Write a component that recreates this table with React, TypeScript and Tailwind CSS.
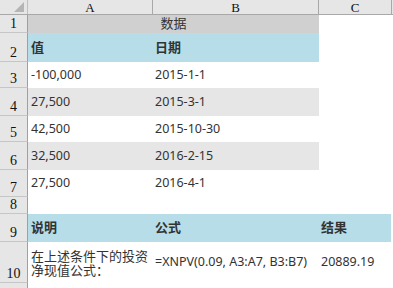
import React from 'react'

// 行高 (px)，与截图逐行对齐
const ROWS: { n: string; h: string }[] = [
  { n: '1', h: 'h-[18px]' },
  { n: '2', h: 'h-[29px]' },
  { n: '3', h: 'h-[26px]' },
  { n: '4', h: 'h-[28px]' },
  { n: '5', h: 'h-[26px]' },
  { n: '6', h: 'h-[28px]' },
  { n: '7', h: 'h-[27px]' },
  { n: '8', h: 'h-[17px]' },
  { n: '9', h: 'h-[28px]' },
  { n: '10', h: 'h-[41px]' },
  { n: '', h: 'h-[20px]' },
]

const data = [
  ['-100,000', '2015-1-1'],
  ['27,500', '2015-3-1'],
  ['42,500', '2015-10-30'],
  ['32,500', '2016-2-15'],
  ['27,500', '2016-4-1'],
]

function RowHead({ n }: { n: string }) {
  return (
    <div className="flex h-full w-[28px] shrink-0 items-end justify-center border-r border-b border-r-[#a0a0a0] border-b-[#c6c6c6] bg-[#e6e6e6] pb-[1px] font-['Liberation_Serif',serif] text-[14px] leading-none text-[#111]">
      {n}
    </div>
  )
}

function Cell({ className = '', children }: { className?: string; children?: React.ReactNode }) {
  return <div className={`flex h-full shrink-0 items-center ${className}`}>{children}</div>
}

export default function App() {
  const font = "font-['Noto_Sans','Noto_Sans_CJK_SC',sans-serif]"
  return (
    <div className={`h-[288px] w-[393px] overflow-hidden bg-white text-[12.5px] text-[#333] ${font}`}>
      {/* 列标题 */}
      <div className="flex h-[15px] border-b border-[#a8a8a8] bg-[#e6e6e6] font-['Liberation_Serif',serif] text-[13px] leading-none text-[#111]">
        <div className="relative w-[28px] shrink-0 border-r border-[#c0c0c0]">
          <svg className="absolute right-[3px] bottom-[2px]" width="10" height="10" viewBox="0 0 10 10">
            <polygon points="10,0 10,10 0,10" fill="#b5b5b5" />
          </svg>
        </div>
        <div className="flex w-[125px] shrink-0 items-center justify-center border-r border-[#a8a8a8]">A</div>
        <div className="flex w-[166px] shrink-0 items-center justify-center border-r border-[#a8a8a8]">B</div>
        <div className="flex w-[73px] shrink-0 items-center justify-center border-r border-[#a8a8a8]">C</div>
      </div>

      {ROWS.map((r, i) => (
        <div key={i} className={`flex ${r.h}`}>
          <RowHead n={r.n} />
          {i === 0 && (
            <Cell className="w-[291px] justify-center bg-[#d0d0d0] text-[13px]">数据</Cell>
          )}
          {i === 1 && (
            <>
              <Cell className="w-[125px] bg-[#b6dde8] pl-[3px] text-[13px] font-bold">值</Cell>
              <Cell className="w-[166px] bg-[#b6dde8] pl-[2px] text-[13px] font-bold">日期</Cell>
            </>
          )}
          {i >= 2 && i <= 6 && (
            <>
              <Cell className={`w-[125px] pl-[3px] ${i % 2 === 1 ? 'bg-[#e6e6e6]' : ''}`}>{data[i - 2][0]}</Cell>
              <Cell className={`w-[166px] pl-[2px] ${i % 2 === 1 ? 'bg-[#e6e6e6]' : ''}`}>{data[i - 2][1]}</Cell>
            </>
          )}
          {i === 8 && (
            <>
              <Cell className="w-[125px] bg-[#b6dde8] pl-[3px] text-[13px] font-bold">说明</Cell>
              <Cell className="w-[166px] bg-[#b6dde8] pl-[2px] text-[13px] font-bold">公式</Cell>
              <Cell className="w-[72px] bg-[#b6dde8] pl-[2px] text-[13px] font-bold">结果</Cell>
            </>
          )}
          {i === 9 && (
            <>
              <Cell className="w-[125px] pl-[3px] text-[13px] leading-[14px]">在上述条件下的投资净现值公式：</Cell>
              <Cell className="w-[166px] pl-[2px]">=XNPV(0.09, A3:A7, B3:B7)</Cell>
              <Cell className="w-[72px] pl-[2px]">20889.19</Cell>
            </>
          )}
        </div>
      ))}
    </div>
  )
}
